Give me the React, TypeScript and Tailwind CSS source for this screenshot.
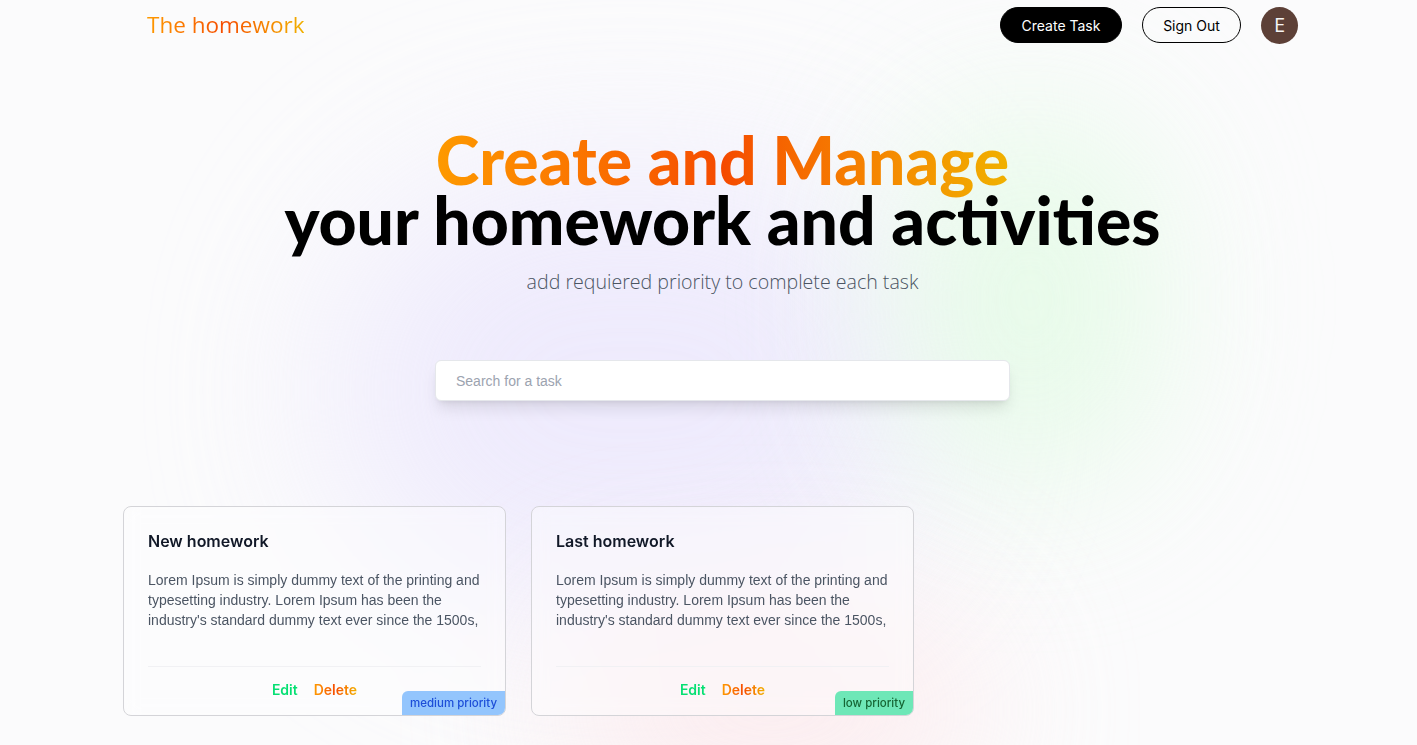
const tasks = [
  {
    title: "New homework",
    body: "Lorem Ipsum is simply dummy text of the printing and typesetting industry. Lorem Ipsum has been the industry's standard dummy text ever since the 1500s,",
    priority: "medium priority",
    badge: "bg-[#93c5fd] text-[#1d4ed8]",
  },
  {
    title: "Last homework",
    body: "Lorem Ipsum is simply dummy text of the printing and typesetting industry. Lorem Ipsum has been the industry's standard dummy text ever since the 1500s,",
    priority: "low priority",
    badge: "bg-[#6ee7b7] text-[#166534]",
  },
];

const TaskCard = ({ task }: { task: (typeof tasks)[number] }) => {
  return (
    <div className="relative w-[383px] h-[210px] rounded-lg border border-[#d4d4d8] bg-white/40 backdrop-blur-sm px-6 pt-[24px] overflow-hidden">
      <div className="font-['Inter',sans-serif] font-semibold text-[16px] text-[#111827] leading-5">{task.title}</div>
      <p className="mt-[19px] font-['Liberation_Sans',Arial,sans-serif] text-[14px] leading-5 text-[#4b5563]">{task.body}</p>

      {/* edit / delete */}
      <div className="mt-[36px] border-t border-[#f1f1f4] pt-[12px] flex justify-center gap-4 font-['Inter',sans-serif] font-semibold text-[14px]">
        <span className="bg-gradient-to-r from-green-400 to-green-400 bg-clip-text text-transparent">Edit</span>
        <span className="bg-gradient-to-r from-amber-500 via-orange-600 to-yellow-500 bg-clip-text text-transparent">Delete</span>
      </div>

      <span className={`absolute right-0 bottom-0 rounded-tl-md px-2 h-[24px] leading-[24px] font-['Inter',sans-serif] font-medium text-[11.5px] ${task.badge}`}>
        {task.priority}
      </span>
    </div>
  );
};

const App = () => {
  return (
    <div className="relative min-h-[745px] w-full overflow-hidden bg-[#fbfbfc]">
      {/* background blobs */}
      <div className="pointer-events-none absolute inset-0">
        <div className="absolute left-[330px] top-[170px] w-[600px] h-[440px] rounded-full bg-[#e9e4fd] opacity-70 blur-[90px]" />
        <div className="absolute left-[900px] top-[110px] w-[260px] h-[380px] rounded-full bg-[#e2fbe4] opacity-80 blur-[80px]" />
        <div className="absolute left-[560px] top-[610px] w-[420px] h-[200px] rounded-full bg-[#fde6e9] opacity-70 blur-[80px]" />
      </div>

      <div className="relative">
        {/* nav */}
        <nav className="flex items-center justify-between h-[50px] pl-[147px] pr-[119px]">
          <div className="font-['Open_Sans',sans-serif] text-[22.5px] bg-gradient-to-r from-amber-500 via-orange-600 to-yellow-500 bg-clip-text text-transparent">
            The homework
          </div>
          <div className="flex items-center gap-5">
            <button className="h-[36px] w-[122px] rounded-full bg-black border border-black text-white font-['Inter',sans-serif] text-[14px]">
              Create Task
            </button>
            <button className="h-[36px] w-[99px] rounded-full bg-transparent border border-black text-black font-['Inter',sans-serif] text-[14px]">
              Sign Out
            </button>
            <div className="w-[37px] h-[37px] rounded-full bg-[#5d4037] text-[#f5f5f5] flex items-center justify-center font-['Open_Sans',sans-serif] text-[20px]">
              E
            </div>
          </div>
        </nav>

        {/* hero */}
        <section className="flex flex-col items-center text-center mt-[80px] pl-[28px]">
          <h1 className="font-['Lato',sans-serif] font-black text-[66px] leading-[60px] text-black">
            <span className="bg-gradient-to-r from-amber-500 via-orange-600 to-yellow-500 bg-clip-text text-transparent">
              Create and Manage
            </span>
            <br />
            your homework and activities
          </h1>
          <p className="mt-[17px] font-['Open_Sans',sans-serif] font-light text-[19.6px] text-[#4b5563]">
            add requiered priority to complete each task
          </p>

          {/* search */}
          <input
            type="text"
            placeholder="Search for a task"
            className="mt-[64px] w-[575px] h-[41px] rounded-md border border-[#e5e7eb] bg-white pl-5 pr-4 font-['Liberation_Sans',Arial,sans-serif] text-[14px] shadow-lg outline-none placeholder:text-[#9ca3af]"
          />
        </section>

        {/* tasks */}
        <div className="mt-[105px] pl-[123px] flex gap-[25px]">
          {tasks.map((task) => (
            <TaskCard key={task.title} task={task} />
          ))}
        </div>
      </div>
    </div>
  );
};

export default App;
